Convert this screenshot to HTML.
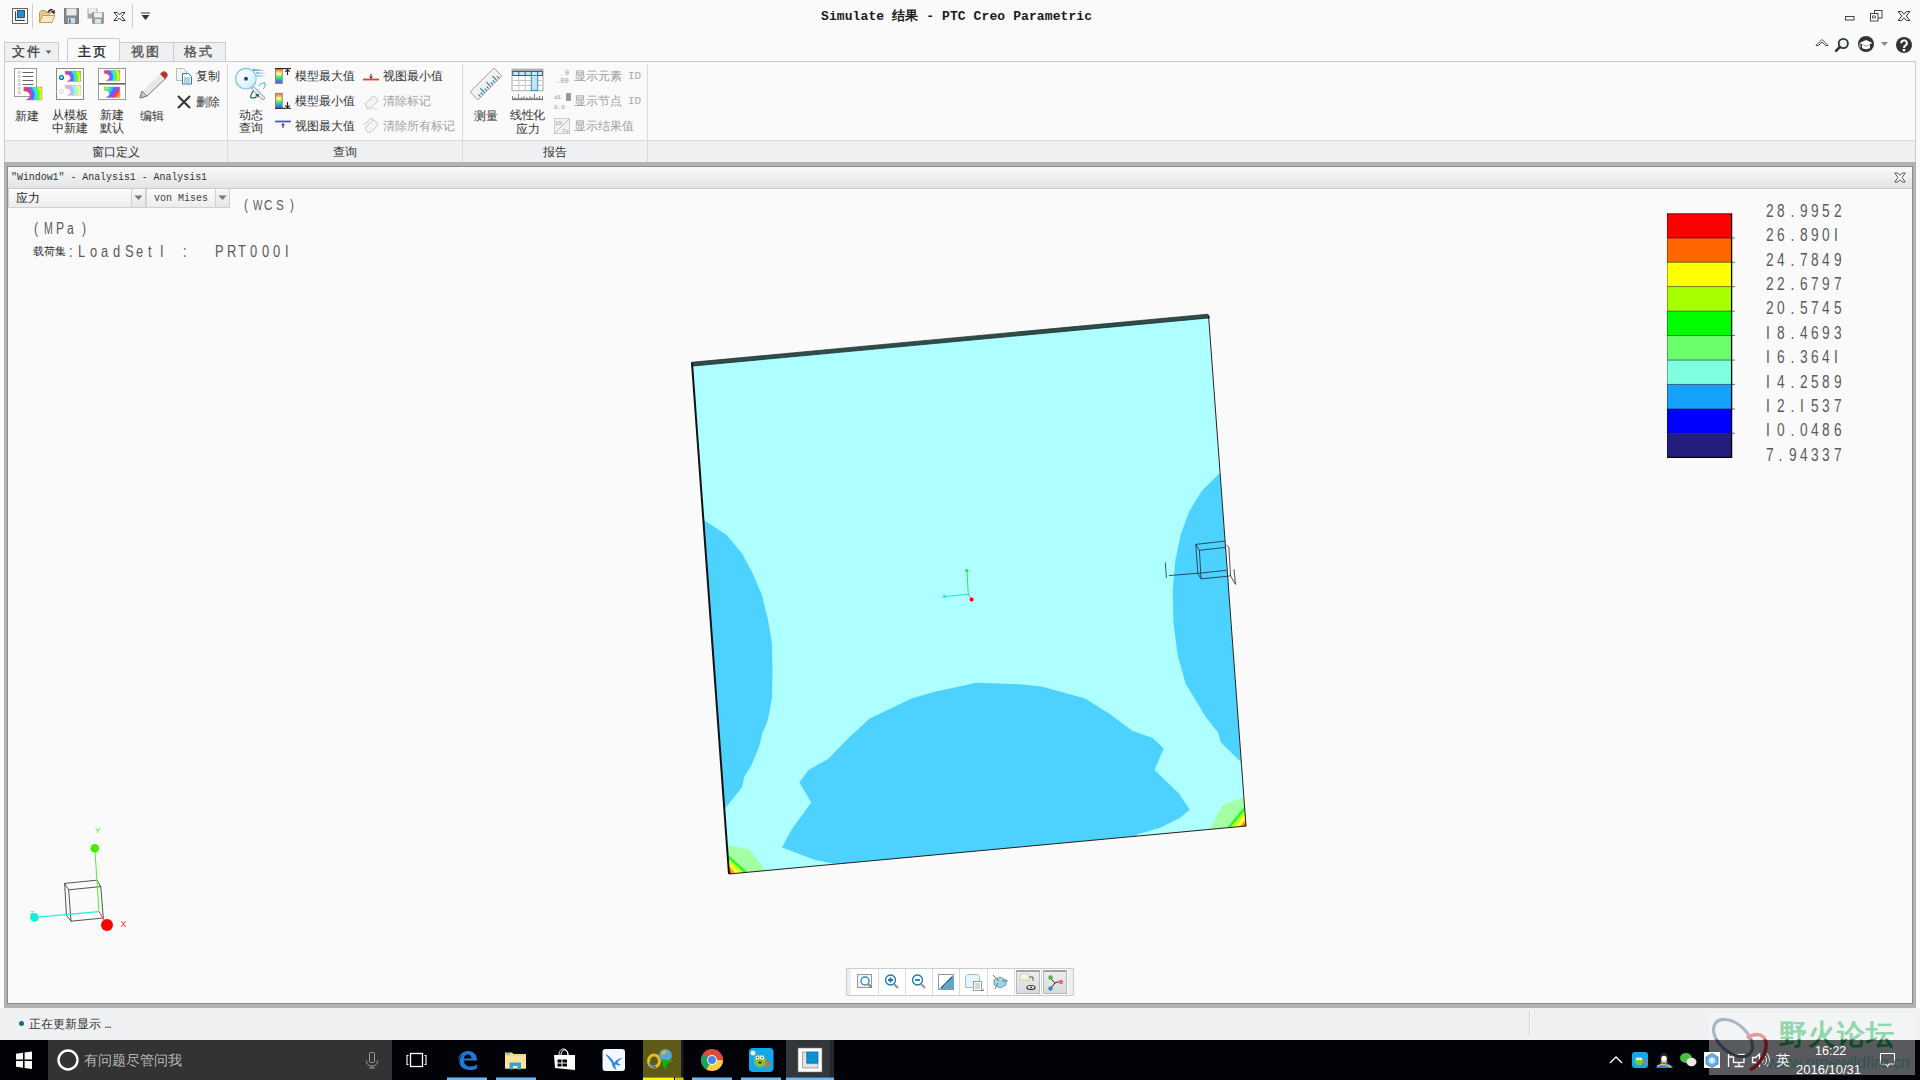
<!DOCTYPE html>
<html><head><meta charset="utf-8">
<style>
*{box-sizing:border-box;margin:0;padding:0}
html,body{width:1920px;height:1080px;overflow:hidden;background:#fafafa;font-family:"Liberation Sans",sans-serif;color:#333}
.a{position:absolute}
.t12{font-size:12px;line-height:14px;white-space:nowrap}
.gray{color:#a8a8a8}
.mono{font-family:"Liberation Mono",monospace}
.sf{font-size:15px;line-height:16px;color:#3a3a3a;white-space:nowrap;font-weight:normal}
.sfx{white-space:nowrap;color:#5a5a5a}
.sfx span{display:inline-block;width:var(--adv);transform:scaleX(0.76);transform-origin:0 0}
</style></head><body>

<!-- ===== Title bar ===== -->
<div id="titlebar" class="a" style="left:0;top:0;width:1920px;height:36px;background:#fafafa"></div>
<div class="a mono" style="left:821px;top:9px;font-size:13px;font-weight:bold;line-height:16px;color:#1a1a1a;white-space:nowrap;letter-spacing:0.1px">Simulate 结果 - PTC Creo Parametric</div>


<!-- quick access toolbar -->
<svg class="a" style="left:11px;top:7px" width="18" height="18" viewBox="0 0 18 18">
 <rect x="1.5" y="1.5" width="15" height="15" fill="#fff" stroke="#666" stroke-width="1"/>
 <path d="M4.5 4.5v9h9" fill="none" stroke="#444" stroke-width="1"/>
 <rect x="4.5" y="4.5" width="9" height="9" fill="#e6e6e2"/>
 <path d="M4.5 4.5v9h9" fill="none" stroke="#444" stroke-width="1"/>
 <rect x="6.5" y="3.5" width="7" height="7" fill="#1a90d8" stroke="#333" stroke-width="0.8"/>
</svg>
<div class="a" style="left:32px;top:4px;width:1px;height:24px;background:#d0d0d0"></div>
<svg class="a" style="left:38px;top:7px" width="18" height="18" viewBox="0 0 18 18">
 <path d="M1.5 15.5v-10l1.5-2h4l1 1.5h4.5v2" fill="#e3c88a" stroke="#b8964c" stroke-width="0.9"/>
 <path d="M1.5 15.5l3-7h12.5l-3 7z" fill="#fbe9c4" stroke="#b8964c" stroke-width="0.9"/>
 <path d="M10 5.5c1-2.5 3-3.5 4.5-2.5" fill="none" stroke="#333" stroke-width="1.6"/>
 <path d="M12.5 4.5l4.5-1.5-.5 4.5z" fill="#333"/>
</svg>
<svg class="a" style="left:63px;top:7px" width="18" height="18" viewBox="0 0 18 18">
 <path d="M1.5 1.5h14v15h-14z" fill="#888" stroke="#666" stroke-width="0.8"/>
 <rect x="3.5" y="1.5" width="10" height="7" fill="#e8e8e8"/>
 <rect x="5" y="11" width="7" height="5.5" fill="#bfe0f0"/>
 <rect x="6" y="11.5" width="1.5" height="4.5" fill="#666"/>
</svg>
<svg class="a" style="left:86px;top:7px" width="19" height="18" viewBox="0 0 19 18">
 <path d="M1.5 1.5h10v10h-10z" fill="#aaa"/>
 <rect x="2.5" y="1.5" width="8" height="5" fill="#eee"/>
 <path d="M6.5 5.5h11v11h-11z" fill="#999" stroke="#888" stroke-width="0.6"/>
 <rect x="8" y="5.5" width="8" height="5" fill="#eee"/>
 <rect x="9" y="12" width="6" height="4.5" fill="#cfe6f2"/>
</svg>
<svg class="a" style="left:113px;top:11px" width="13" height="11" viewBox="0 0 13 11">
 <path d="M1 1.5h3.2l2.3 2.5 2.3-2.5H12L8.6 5.5 12 9.5H8.8L6.5 7 4.2 9.5H1l3.4-4z" fill="#fff" stroke="#333" stroke-width="1"/>
</svg>
<div class="a" style="left:132px;top:4px;width:1px;height:24px;background:#d0d0d0"></div>
<svg class="a" style="left:140px;top:12px" width="11" height="9" viewBox="0 0 11 9">
 <path d="M1 1h9" stroke="#333" stroke-width="1"/><path d="M1.5 3h8L5.5 8z" fill="#333"/>
</svg>

<!-- window controls -->
<svg class="a" style="left:1844px;top:15px" width="12" height="7" viewBox="0 0 12 7"><rect x="1.5" y="1.5" width="8.5" height="3.5" fill="none" stroke="#444" stroke-width="1"/></svg>
<svg class="a" style="left:1869px;top:9px" width="15" height="14" viewBox="0 0 15 14">
 <rect x="5.5" y="1.5" width="7.5" height="7.5" fill="#fff" stroke="#444" stroke-width="1"/>
 <rect x="1.5" y="4.5" width="7.5" height="7.5" fill="#fff" stroke="#444" stroke-width="1"/>
 <rect x="3.5" y="7" width="3" height="2" fill="none" stroke="#444" stroke-width="0.8"/>
</svg>
<svg class="a" style="left:1897px;top:10px" width="14" height="12" viewBox="0 0 14 12">
 <path d="M1.2 1.5h3.3l2.5 2.7 2.5-2.7h3.3L9.2 6l3.6 4.5H9.5L7 7.8 4.5 10.5H1.2L4.8 6z" fill="#fff" stroke="#333" stroke-width="1"/>
</svg>
<svg class="a" style="left:1815px;top:38px" width="14" height="9" viewBox="0 0 14 9">
 <path d="M1 7.5L7 1.5l6 6h-2.5L7 4 3.5 7.5z" fill="#fff" stroke="#333" stroke-width="0.9"/>
</svg>
<svg class="a" style="left:1834px;top:37px" width="16" height="16" viewBox="0 0 16 16">
 <circle cx="9.3" cy="6.5" r="4.6" fill="#eaf4fb" stroke="#333" stroke-width="1.8"/>
 <path d="M5.8 10L2 13.8" stroke="#333" stroke-width="2.5" stroke-linecap="round"/>
</svg>
<svg class="a" style="left:1857px;top:35px" width="18" height="18" viewBox="0 0 18 18">
 <circle cx="9" cy="9" r="8" fill="#333"/>
 <path d="M2.5 8L9 5l6.5 3L9 11z" fill="#fff"/>
 <path d="M5 9.5v3.5c2 1.5 6 1.5 8 0V9.5L9 11.5z" fill="#fff"/>
 <path d="M3 8.5v4" stroke="#fff" stroke-width="0.8"/>
</svg>
<svg class="a" style="left:1880px;top:41px" width="9" height="6" viewBox="0 0 9 6"><path d="M1 1h7L4.5 5z" fill="#888"/></svg>
<svg class="a" style="left:1895px;top:36px" width="18" height="18" viewBox="0 0 18 18">
 <circle cx="9" cy="9" r="8" fill="#333"/>
 <path d="M6.2 7.2a2.8 2.8 0 1 1 4 2.5c-1 .6-1.2 1-1.2 2.2" fill="none" stroke="#fff" stroke-width="2"/>
 <rect x="7.8" y="13" width="2.4" height="2.3" fill="#fff"/>
</svg>

<!-- ===== Tabs ===== -->
<div class="a" style="left:4px;top:42px;width:55px;height:20px;background:#eff0f2;border:1px solid #c8cbcf;border-bottom:none"></div>
<div class="a t12" style="left:12px;top:45px;color:#444;font-size:13px;letter-spacing:1.5px;-webkit-text-stroke:0.35px">文件</div><svg class="a" style="left:45px;top:50px" width="7" height="5" viewBox="0 0 7 5"><path d="M0.5 0.5h6L3.5 4z" fill="#666"/></svg>
<div class="a" style="left:67px;top:38px;width:53px;height:24px;background:#fafafa;border:1px solid #c8cbcf;border-bottom:none;border-radius:2px 2px 0 0"></div>
<div class="a t12" style="left:78px;top:45px;color:#222;font-size:13px;letter-spacing:1.5px;-webkit-text-stroke:0.35px">主页</div>
<div class="a" style="left:120px;top:42px;width:54px;height:20px;background:#eff0f2;border:1px solid #c8cbcf;border-bottom:none;border-left:none"></div>
<div class="a t12" style="left:131px;top:45px;color:#555;font-size:13px;letter-spacing:1.5px;-webkit-text-stroke:0.35px">视图</div>
<div class="a" style="left:173px;top:42px;width:53px;height:20px;background:#eff0f2;border:1px solid #c8cbcf;border-bottom:none"></div>
<div class="a t12" style="left:184px;top:45px;color:#555;font-size:13px;letter-spacing:1.5px;-webkit-text-stroke:0.35px">格式</div>

<!-- ===== Ribbon ===== -->
<div class="a" style="left:4px;top:61px;width:1912px;height:102px;background:#fafafa;border:1px solid #c8cbcf;border-bottom:none"></div>
<div class="a" style="left:5px;top:140px;width:1910px;height:23px;background:#eff0f2;border-top:1px solid #d4d6d9"></div>
<div class="a t12" style="left:92px;top:145px">窗口定义</div>
<div class="a t12" style="left:333px;top:145px">查询</div>
<div class="a t12" style="left:543px;top:145px">报告</div>
<div class="a" style="left:227px;top:64px;width:1px;height:99px;background:#d8dadd"></div>
<div class="a" style="left:462px;top:64px;width:1px;height:99px;background:#d8dadd"></div>
<div class="a" style="left:647px;top:64px;width:1px;height:99px;background:#d8dadd"></div>


<!-- ribbon group 1 -->
<svg class="a" style="left:0;top:60px" width="135" height="45" viewBox="0 60 135 45">
 <defs>
  <radialGradient id="rg1" gradientUnits="userSpaceOnUse" cx="24" cy="95" r="20">
   <stop offset="0.28" stop-color="#ff3030"/><stop offset="0.38" stop-color="#b040ff"/><stop offset="0.48" stop-color="#3080ff"/><stop offset="0.58" stop-color="#30e0ff"/><stop offset="0.72" stop-color="#40ff40"/><stop offset="0.86" stop-color="#ffff00"/><stop offset="1" stop-color="#ff8000"/>
  </radialGradient>
  <radialGradient id="rg2" gradientUnits="userSpaceOnUse" cx="64.5" cy="78" r="17">
   <stop offset="0.3" stop-color="#ff3030"/><stop offset="0.4" stop-color="#b040ff"/><stop offset="0.5" stop-color="#3080ff"/><stop offset="0.6" stop-color="#30e0ff"/><stop offset="0.74" stop-color="#40ff40"/><stop offset="0.88" stop-color="#ffff00"/><stop offset="1" stop-color="#ff8000"/>
  </radialGradient>
  <radialGradient id="rg3" gradientUnits="userSpaceOnUse" cx="64.5" cy="92" r="17">
   <stop offset="0.3" stop-color="#ff3030"/><stop offset="0.4" stop-color="#b040ff"/><stop offset="0.5" stop-color="#3080ff"/><stop offset="0.6" stop-color="#30e0ff"/><stop offset="0.74" stop-color="#40ff40"/><stop offset="0.88" stop-color="#ffff00"/><stop offset="1" stop-color="#ff8000"/>
  </radialGradient>
  <radialGradient id="rg4" gradientUnits="userSpaceOnUse" cx="103.5" cy="77" r="17">
   <stop offset="0.3" stop-color="#ff3030"/><stop offset="0.4" stop-color="#b040ff"/><stop offset="0.5" stop-color="#3080ff"/><stop offset="0.6" stop-color="#30e0ff"/><stop offset="0.74" stop-color="#40ff40"/><stop offset="0.88" stop-color="#ffff00"/><stop offset="1" stop-color="#ff8000"/>
  </radialGradient>
  <linearGradient id="lg5" gradientUnits="userSpaceOnUse" x1="104" y1="87" x2="120" y2="98">
   <stop offset="0" stop-color="#ffff00"/><stop offset="0.2" stop-color="#60ff60"/><stop offset="0.38" stop-color="#30c0ff"/><stop offset="0.5" stop-color="#3070ff"/><stop offset="0.62" stop-color="#b040ff"/><stop offset="0.72" stop-color="#ff3030"/><stop offset="0.86" stop-color="#ffa000"/><stop offset="1" stop-color="#ffff00"/>
  </linearGradient>
 </defs>
 <!-- 新建 -->
 <rect x="14.5" y="68.5" width="22" height="28" fill="#fff" stroke="#9a9a9a"/>
 <g fill="none" stroke="#999" stroke-width="0.7"><circle cx="19.3" cy="72.5" r="1.1"/><circle cx="19.3" cy="76.5" r="1.1"/><circle cx="19.3" cy="80.5" r="1.1"/><circle cx="19.3" cy="84.5" r="1.1"/><circle cx="19.3" cy="88.5" r="1.1"/><circle cx="19.3" cy="92.5" r="1.1"/></g>
 <path d="M22.5 72.5h11M22.5 76.5h11M22.5 80.5h11M22.5 84.5h11" stroke="#555" stroke-width="0.9"/>
 <path d="M23.8 87.0H41.9V100.0H25.9C29.4 98.1 30.5 96.2 29.8 94.4C28.8 91.9 26.5 91.0 23.8 91.0Z" fill="url(#rg1)" stroke="#999" stroke-width="0.5"/>
 <!-- 从模板中新建 -->
 <rect x="56.5" y="68.5" width="27" height="31" fill="#fff" stroke="#8a8a8a"/>
 <circle cx="61.5" cy="77.5" r="2" fill="#8fe0f8" stroke="#0a6a90" stroke-width="1.1"/>
 <circle cx="61.5" cy="91.5" r="2" fill="#fff" stroke="#ccc" stroke-width="0.9"/>
 <path d="M65.2 71.1H80.8V81.5H67.0C70.0 80.0 71.0 78.5 70.4 77.0C69.5 75.0 67.5 74.3 65.2 74.3Z" fill="url(#rg2)" stroke="#999" stroke-width="0.5"/>
 <path d="M65.2 85.1H80.8V95.5H67.0C70.0 94.0 71.0 92.5 70.4 91.0C69.5 89.0 67.5 88.3 65.2 88.3Z" fill="url(#rg3)" opacity="0.45" stroke="#999" stroke-width="0.5"/>
 <!-- 新建默认 -->
 <rect x="98.5" y="68.5" width="27" height="15" fill="#fff" stroke="#9a9a9a"/>
 <rect x="98.5" y="84.5" width="27" height="15" fill="#fff" stroke="#9a9a9a"/>
 <path d="M98.5 83.5h27" stroke="#666" stroke-width="1"/>
 <path d="M104.2 70.2H119.8V80.8H106.0C109.0 79.3 110.0 77.7 109.4 76.2C108.5 74.2 106.5 73.5 104.2 73.5Z" fill="url(#rg4)" stroke="#999" stroke-width="0.5"/>
 <path d="M104.2 87.0H119.8V97.6H106.0C109.0 96.1 110.0 94.5 109.4 93.0C108.5 91.0 106.5 90.3 104.2 90.3Z" fill="url(#lg5)" stroke="#888" stroke-width="0.5"/>
</svg>
<div class="a t12" style="left:15px;top:109px">新建</div>
<div class="a t12" style="left:52px;top:109px;line-height:13px">从模板<br>中新建</div>
<div class="a t12" style="left:100px;top:109px;line-height:13px">新建<br>默认</div>

<svg class="a" style="left:136px;top:68px" width="32" height="32" viewBox="0 0 32 32">
 <path d="M4 30l2-7 19-18 5 5-19 18z" fill="#e8e8e8" stroke="#777" stroke-width="1"/>
 <path d="M6 23l19-18" stroke="#fff" stroke-width="1.2"/>
 <path d="M24 6l5 5 1.5-1.5a2.5 2.5 0 0 0-5-5z" fill="#b03a2a"/>
 <path d="M4 30l2-7 5 5z" fill="#d9c3a0" stroke="#777" stroke-width="0.8"/>
</svg>
<div class="a t12" style="left:140px;top:109px">编辑</div>

<svg class="a" style="left:175px;top:67px" width="18" height="18" viewBox="0 0 18 18">
 <path d="M1.5 1.5h7l3 3v9h-10z" fill="#f4f4f4" stroke="#aaa" stroke-width="0.8"/>
 <path d="M7.5 6.5h6l3 3v7.5h-9z" fill="#fff" stroke="#2a7ab0" stroke-width="1"/>
 <path d="M9 11h6M9 13h6M9 15h6" stroke="#2a7ab0" stroke-width="0.7"/>
</svg>
<div class="a t12" style="left:196px;top:69px">复制</div>
<svg class="a" style="left:176px;top:94px" width="16" height="16" viewBox="0 0 16 16">
 <path d="M2 2l12 12M14 2L2 14" stroke="#3a3a3a" stroke-width="2.2"/>
</svg>
<div class="a t12" style="left:196px;top:95px">删除</div>

<!-- ribbon group 2 -->
<svg class="a" style="left:228px;top:62px" width="45" height="42" viewBox="228 62 45 42">
 <defs>
  <radialGradient id="lens" cx="0.35" cy="0.35" r="0.75"><stop offset="0" stop-color="#ffffff"/><stop offset="1" stop-color="#cdeef8"/></radialGradient>
  <linearGradient id="spd" x1="0" x2="1"><stop offset="0" stop-color="#1a8cc8"/><stop offset="1" stop-color="#1a8cc8" stop-opacity="0"/></linearGradient>
 </defs>
 <path d="M253 69.2l11 .6v1.2l-11-.2zM256 72.2l10.5.5v1.2l-10.5-.2zM256.5 75.2l10 .4v1.2l-10-.2z" fill="url(#spd)"/>
 <path d="M253.5 88.5l9.5 9.5" stroke="#a8a8a8" stroke-width="4" stroke-linecap="round"/>
 <path d="M253.5 88.5l9.5 9.5" stroke="#f0f0f0" stroke-width="2" stroke-linecap="round"/>
 <circle cx="245.9" cy="78.7" r="10.3" fill="url(#lens)" stroke="#7cc4e0" stroke-width="1.1"/>
 <circle cx="246" cy="78.8" r="2" fill="#0a5a80"/>
 <path d="M258.5 85.5c2.5-2 5.5-3 6.5-2.5 1 .8-.5 4-1.5 6" fill="none" stroke="#3aa8dc" stroke-width="1"/>
 <path d="M253.5 91c-2 2-3.5 5.5-2.5 6.5 1 1 4 .3 5.5-.8" fill="none" stroke="#0a5a80" stroke-width="1.1"/>
 <path d="M255 94.5l4-.7-.8 4z" fill="#0a5a80"/>
</svg>
<div class="a t12" style="left:239px;top:109px;line-height:12.5px">动态<br>查询</div>

<svg class="a" style="left:272px;top:66px" width="22" height="46" viewBox="272 66 22 46">
 <defs><linearGradient id="spec" x1="0" y1="0" x2="0" y2="1"><stop offset="0" stop-color="#ff6a30"/><stop offset="0.2" stop-color="#ffc030"/><stop offset="0.33" stop-color="#fff8c0"/><stop offset="0.48" stop-color="#a8f060"/><stop offset="0.6" stop-color="#40f040"/><stop offset="0.75" stop-color="#20b0f0"/><stop offset="0.88" stop-color="#3a70f0"/><stop offset="1" stop-color="#a050d0"/></linearGradient></defs>
 <rect x="275.6" y="68.6" width="6.6" height="14.8" fill="url(#spec)" stroke="#808080" stroke-width="1"/>
 <path d="M275 68.6h16" stroke="#222" stroke-width="1.1"/>
 <path d="M287.5 75V69.5M285.3 71.8l2.2-2.3 2.2 2.3" fill="none" stroke="#222" stroke-width="1.1"/>
 <rect x="275.6" y="93.4" width="6.6" height="14.8" fill="url(#spec)" stroke="#808080" stroke-width="1"/>
 <path d="M275 108.3h16" stroke="#222" stroke-width="1.1"/>
 <path d="M287.5 102v5.6M285.3 105.4l2.2 2.3 2.2-2.3" fill="none" stroke="#222" stroke-width="1.1"/>
</svg>
<div class="a t12" style="left:295px;top:69px">模型最大值</div>

<div class="a t12" style="left:295px;top:94px">模型最小值</div>
<svg class="a" style="left:274px;top:119px" width="18" height="12" viewBox="0 0 18 12">
 <path d="M1 2.5h16" stroke="#4a5ad8" stroke-width="1.8"/>
 <path d="M9 9V4.5M7.6 6.4L9 4.8l1.4 1.6" fill="none" stroke="#222" stroke-width="1"/>
</svg>
<div class="a t12" style="left:295px;top:119px">视图最大值</div>

<svg class="a" style="left:362px;top:70px" width="18" height="12" viewBox="0 0 18 12">
 <path d="M1 9.5h16" stroke="#e8402a" stroke-width="1.8"/>
 <path d="M9 4v4.5M7.6 6.6L9 8.2l1.4-1.6" fill="none" stroke="#222" stroke-width="1"/>
</svg>
<div class="a t12" style="left:383px;top:69px">视图最小值</div>
<svg class="a" style="left:362px;top:94px" width="18" height="16" viewBox="0 0 18 16">
 <path d="M3 10l7-7a2 2 0 0 1 3 0l2 2a2 2 0 0 1 0 3l-6 6H5z" fill="#f4f4f4" stroke="#c8c8c8" stroke-width="1"/>
 <path d="M4 15h12" stroke="#ddd" stroke-width="1"/>
</svg>
<div class="a t12 gray" style="left:383px;top:94px;color:#a0a0a0">清除标记</div>
<svg class="a" style="left:362px;top:117px" width="18" height="18" viewBox="0 0 18 18">
 <path d="M2 8l6-6a2 2 0 0 1 3 0l3 3" fill="#f4f4f4" stroke="#c8c8c8" stroke-width="1"/>
 <path d="M3 11l7-7a2 2 0 0 1 3 0l2 2a2 2 0 0 1 0 3l-6 6H5z" fill="#f4f4f4" stroke="#c8c8c8" stroke-width="1"/>
</svg>
<div class="a t12" style="left:383px;top:119px;color:#a0a0a0">清除所有标记</div>

<!-- ribbon group 3 -->
<svg class="a" style="left:466px;top:64px" width="80" height="40" viewBox="466 64 80 40">
 <path d="M494.1 68L501.8 76.1L478.1 99.8L470 91.9Z" fill="#f0f0f0" stroke="#9a9a9a" stroke-width="0.9"/>
 <path d="M480.4 96.6L478.6 94.7M482.5 94.5L480.6 92.7M484.5 92.5L480.3 88.3M486.5 90.5L484.7 88.6M488.6 88.4L486.7 86.6M490.6 86.4L486.4 82.2M492.7 84.3L490.8 82.5M494.7 82.3L492.8 80.4M496.7 80.3L492.5 76.1M498.8 78.2L496.9 76.4" stroke="#1a78a8" stroke-width="1.1"/>
 <rect x="512" y="69.2" width="31" height="21.5" fill="#fff" stroke="#aaa" stroke-width="1"/>
 <rect x="512" y="69" width="31" height="2" fill="#b0aca8"/>
 <rect x="512.8" y="71.5" width="29.5" height="4" fill="#c8e8f6"/>
 <path d="M512.5 71.5h30M512.5 75.5h30M512.8 71v5M518.8 71v5M525.2 71v5M531.3 71v5M537.7 71v5M542.4 71v5" stroke="#1a6a98" stroke-width="1"/>
 <path d="M512.5 80.5h30M512.5 85.5h30M518.8 76v14.5M525.2 76v14.5" stroke="#c4c4c4" stroke-width="1"/>
 <rect x="531.3" y="75.5" width="6.4" height="15" fill="#c2e4f4" stroke="#2a90c8" stroke-width="1"/>
 <path d="M512 99.3h31" stroke="#777" stroke-width="1.6"/>
 <path d="M512.5 99v-3M515 99v-2M518.5 99v-5M521.5 99v-2M524 99v-3M527 99v-2M530 99v-3M532 99v-2M534.5 99v-5M537 99v-2M539.5 99v-3M542.5 99v-3" stroke="#777" stroke-width="0.9"/>
</svg>
<div class="a t12" style="left:474px;top:109px">测量</div>

<div class="a t12" style="left:510px;top:109px;line-height:13px;letter-spacing:-0.5px">线性化</div><div class="a t12" style="left:516px;top:122px">应力</div>

<svg class="a" style="left:555px;top:68px" width="18" height="18" viewBox="0 0 18 18">
 <text x="1" y="15" font-size="7" fill="#999" font-family="Liberation Mono">.00</text>
 <text x="10" y="7" font-size="7" fill="#999" font-family="Liberation Mono">0</text>
</svg>
<div class="a t12" style="left:574px;top:69px;color:#a0a0a0">显示元素</div>
<div class="a mono" style="left:628px;top:70px;font-size:11px;line-height:12px;color:#a8a8a8">ID</div>
<svg class="a" style="left:553px;top:92px" width="20" height="18" viewBox="0 0 20 18">
 <text x="1" y="7" font-size="6" fill="#999" font-family="Liberation Mono">d1</text>
 <text x="1" y="17" font-size="6" fill="#999" font-family="Liberation Mono">0.0</text>
 <rect x="13" y="1" width="5" height="8" rx="1" fill="#999"/>
</svg>
<div class="a t12" style="left:574px;top:94px;color:#a0a0a0">显示节点</div>
<div class="a mono" style="left:628px;top:95px;font-size:11px;line-height:12px;color:#a8a8a8">ID</div>
<svg class="a" style="left:553px;top:117px" width="18" height="18" viewBox="0 0 18 18">
 <rect x="1.5" y="1.5" width="15" height="15" fill="#f2f2f2" stroke="#ccc"/>
 <path d="M2 16L16 2" stroke="#bbb"/>
 <text x="2" y="8" font-size="6" fill="#999" font-family="Liberation Mono">15</text>
 <text x="9" y="16" font-size="6" fill="#999" font-family="Liberation Mono">7x</text>
</svg>
<div class="a t12" style="left:574px;top:119px;color:#a0a0a0">显示结果值</div>

<!-- ===== Graphics window frame ===== -->
<div class="a" style="left:4px;top:162px;width:1912px;height:847px;background:#b1b2b4;border-bottom:1.5px solid #8e8f91"></div>
<div class="a" style="left:7px;top:166px;width:1906px;height:838px;background:#fafafa;border:1px solid #8a8b8d"></div>
<div class="a" style="left:8px;top:167px;width:1904px;height:22px;background:linear-gradient(#f9f9f9,#e3e4e5);border-bottom:1px solid #c9cacc"></div>
<div class="a mono" style="left:11px;top:171px;font-size:11px;line-height:13px;color:#333;white-space:nowrap;transform:scaleX(0.9);transform-origin:0 0">"Window1" - Analysis1 - Analysis1</div>


<svg class="a" style="left:1894px;top:172px" width="12" height="11" viewBox="0 0 12 11">
 <path d="M0.8 1h3l2.2 2.4L8.2 1h3L8 5.5l3.2 4.5h-3L6 7.6 3.8 10h-3L4 5.5z" fill="#fff" stroke="#444" stroke-width="0.9"/>
</svg>
<!-- dropdowns -->
<div class="a" style="left:8px;top:189px;width:138px;height:19px;background:linear-gradient(#fdfdfd,#ececed);border:1px solid #d0d1d3;border-top:none"></div>
<div class="a" style="left:131px;top:189px;width:15px;height:19px;background:linear-gradient(#f8f8f8,#e4e5e6);border:1px solid #d0d1d3;border-top:none"></div>
<svg class="a" style="left:134px;top:195px" width="9" height="6" viewBox="0 0 9 6"><path d="M0.5 0.5h8L4.5 5z" fill="#777"/></svg>
<div class="a t12" style="left:16px;top:191px;color:#222">应力</div>
<div class="a" style="left:146px;top:189px;width:84px;height:19px;background:linear-gradient(#fdfdfd,#ececed);border:1px solid #d0d1d3;border-top:none"></div>
<div class="a" style="left:215px;top:189px;width:15px;height:19px;background:linear-gradient(#f8f8f8,#e4e5e6);border:1px solid #d0d1d3;border-top:none"></div>
<svg class="a" style="left:218px;top:195px" width="9" height="6" viewBox="0 0 9 6"><path d="M0.5 0.5h8L4.5 5z" fill="#777"/></svg>
<div class="a mono" style="left:154px;top:192px;font-size:11px;line-height:13px;color:#444;white-space:nowrap;transform:scaleX(0.91);transform-origin:0 0">von Mises</div>

<!-- stroke font texts -->
<div class="a" style="left:33px;top:244px;font-size:11px;line-height:14px;font-weight:500;color:#333;white-space:nowrap;letter-spacing:-0.2px">载荷集</div>

<div class="a sfx" style="left:244px;top:197px;font-size:15.5px;line-height:16px;--adv:12px"><span style="width:8.5px">(</span><span style="width:11.5px;transform:scaleX(0.64)">W</span><span style="width:11.5px">C</span><span style="width:14px">S</span><span>)</span></div>
<div class="a sfx" style="left:34px;top:220px;font-size:16px;line-height:17px;--adv:12px"><span style="width:10px">(</span><span style="width:12.3px;transform:scaleX(0.66)">M</span><span style="width:11px">P</span><span style="width:14.5px">a</span><span>)</span></div>
<div class="a sfx" style="left:69px;top:243px;font-size:17px;line-height:17px;--adv:11.7px"><span style="width:9px">:</span><span>L</span><span>o</span><span>a</span><span>d</span><span>S</span><span>e</span><span>t</span><span>I</span></div>
<div class="a sfx" style="left:183px;top:243px;font-size:17px;line-height:17px;--adv:11.7px"><span>:</span></div>
<div class="a sfx" style="left:215px;top:243px;font-size:17px;line-height:17px;--adv:11.7px"><span>P</span><span>R</span><span>T</span><span>0</span><span>0</span><span>0</span><span>I</span></div>
<!-- legend -->
<svg class="a" style="left:1660px;top:205px" width="80" height="260" viewBox="1660 205 80 260">
 <rect x="1667" y="213.4" width="64.5" height="24.6" fill="#ff0000"/>
 <rect x="1667" y="238.0" width="64.5" height="24.3" fill="#ff6600"/>
 <rect x="1667" y="262.3" width="64.5" height="24.3" fill="#ffff00"/>
 <rect x="1667" y="286.6" width="64.5" height="24.6" fill="#a6ff00"/>
 <rect x="1667" y="311.2" width="64.5" height="24.3" fill="#00ff00"/>
 <rect x="1667" y="335.5" width="64.5" height="24.6" fill="#6aff6a"/>
 <rect x="1667" y="360.1" width="64.5" height="24.3" fill="#80ffe0"/>
 <rect x="1667" y="384.4" width="64.5" height="24.6" fill="#16a0ff"/>
 <rect x="1667" y="409.0" width="64.5" height="24.3" fill="#0000ff"/>
 <rect x="1667" y="433.3" width="64.5" height="24.2" fill="#231e7c"/>
 <path d="M1667 238.0H1731.5" stroke="rgba(0,0,0,0.5)" stroke-width="1"/>
 <path d="M1731.5 238.0H1735" stroke="#777" stroke-width="1"/>
 <path d="M1667 262.3H1731.5" stroke="rgba(0,0,0,0.5)" stroke-width="1"/>
 <path d="M1731.5 262.3H1735" stroke="#777" stroke-width="1"/>
 <path d="M1667 286.6H1731.5" stroke="rgba(0,0,0,0.5)" stroke-width="1"/>
 <path d="M1731.5 286.6H1735" stroke="#777" stroke-width="1"/>
 <path d="M1667 311.2H1731.5" stroke="rgba(0,0,0,0.5)" stroke-width="1"/>
 <path d="M1731.5 311.2H1735" stroke="#777" stroke-width="1"/>
 <path d="M1667 335.5H1731.5" stroke="rgba(0,0,0,0.5)" stroke-width="1"/>
 <path d="M1731.5 335.5H1735" stroke="#777" stroke-width="1"/>
 <path d="M1667 360.1H1731.5" stroke="rgba(0,0,0,0.5)" stroke-width="1"/>
 <path d="M1731.5 360.1H1735" stroke="#777" stroke-width="1"/>
 <path d="M1667 384.4H1731.5" stroke="rgba(0,0,0,0.5)" stroke-width="1"/>
 <path d="M1731.5 384.4H1735" stroke="#777" stroke-width="1"/>
 <path d="M1667 409.0H1731.5" stroke="rgba(0,0,0,0.5)" stroke-width="1"/>
 <path d="M1731.5 409.0H1735" stroke="#777" stroke-width="1"/>
 <path d="M1667 433.3H1731.5" stroke="rgba(0,0,0,0.5)" stroke-width="1"/>
 <path d="M1731.5 433.3H1735" stroke="#777" stroke-width="1"/>
 <path d="M1667 213.9H1731.5" stroke="rgba(0,0,0,0.5)" stroke-width="1"/>
 <path d="M1667.5 213.4V457.5" stroke="rgba(0,0,0,0.3)" stroke-width="1"/>
 <path d="M1731.6 213.4V458" stroke="#000" stroke-width="1.3"/>
 <path d="M1667 457.4H1732" stroke="#000" stroke-width="1.2"/>
</svg>
<div class="a sfx" style="left:1766px;top:201.7px;font-size:18px;line-height:18px;--adv:11.3px"><span>2</span><span>8</span><span style="transform:scaleX(0.76) translateX(2px)">.</span><span>9</span><span>9</span><span>5</span><span>2</span></div>
<div class="a sfx" style="left:1766px;top:226.1px;font-size:18px;line-height:18px;--adv:11.3px"><span>2</span><span>6</span><span style="transform:scaleX(0.76) translateX(2px)">.</span><span>8</span><span>9</span><span>0</span><span>I</span></div>
<div class="a sfx" style="left:1766px;top:250.5px;font-size:18px;line-height:18px;--adv:11.3px"><span>2</span><span>4</span><span style="transform:scaleX(0.76) translateX(2px)">.</span><span>7</span><span>8</span><span>4</span><span>9</span></div>
<div class="a sfx" style="left:1766px;top:274.9px;font-size:18px;line-height:18px;--adv:11.3px"><span>2</span><span>2</span><span style="transform:scaleX(0.76) translateX(2px)">.</span><span>6</span><span>7</span><span>9</span><span>7</span></div>
<div class="a sfx" style="left:1766px;top:299.3px;font-size:18px;line-height:18px;--adv:11.3px"><span>2</span><span>0</span><span style="transform:scaleX(0.76) translateX(2px)">.</span><span>5</span><span>7</span><span>4</span><span>5</span></div>
<div class="a sfx" style="left:1766px;top:323.7px;font-size:18px;line-height:18px;--adv:11.3px"><span>I</span><span>8</span><span style="transform:scaleX(0.76) translateX(2px)">.</span><span>4</span><span>6</span><span>9</span><span>3</span></div>
<div class="a sfx" style="left:1766px;top:348.1px;font-size:18px;line-height:18px;--adv:11.3px"><span>I</span><span>6</span><span style="transform:scaleX(0.76) translateX(2px)">.</span><span>3</span><span>6</span><span>4</span><span>I</span></div>
<div class="a sfx" style="left:1766px;top:372.5px;font-size:18px;line-height:18px;--adv:11.3px"><span>I</span><span>4</span><span style="transform:scaleX(0.76) translateX(2px)">.</span><span>2</span><span>5</span><span>8</span><span>9</span></div>
<div class="a sfx" style="left:1766px;top:396.9px;font-size:18px;line-height:18px;--adv:11.3px"><span>I</span><span>2</span><span style="transform:scaleX(0.76) translateX(2px)">.</span><span>I</span><span>5</span><span>3</span><span>7</span></div>
<div class="a sfx" style="left:1766px;top:421.3px;font-size:18px;line-height:18px;--adv:11.3px"><span>I</span><span>0</span><span style="transform:scaleX(0.76) translateX(2px)">.</span><span>0</span><span>4</span><span>8</span><span>6</span></div>
<div class="a sfx" style="left:1766px;top:445.7px;font-size:18px;line-height:18px;--adv:11.3px"><span>7</span><span style="transform:scaleX(0.76) translateX(2px)">.</span><span>9</span><span>4</span><span>3</span><span>3</span><span>7</span></div>
<!-- model & triads -->
<svg class="a" style="left:0;top:0" width="1920" height="1080" viewBox="0 0 1920 1080">
 <defs>
  <clipPath id="plate"><path d="M691.5 362.5L1208 314.5L1246 826L729 874Z"/></clipPath>
 </defs>
 <path d="M691.5 362.5L1208 314.5L1246 826L729 874Z" fill="#aeffff"/>
 <g clip-path="url(#plate)">
  <path d="M690 500L703.7 519.9L726.7 535.1L742 553.5L752.6 573.3L761.8 594.7L767.9 619.2L771.9 643.6L772.5 671.1L771.9 698.6L767.9 720L762.7 732.2L758.8 747.5L751.1 765.8L744.4 776.5L742 787.2L725.1 808.6L700 830Z" fill="#4dd2ff"/>
  <path d="M1240 460L1220.7 472.3L1201.9 490.8L1188.9 511.9L1180.8 534.6L1175.3 560.6L1172.7 589.8L1173.4 622.2L1177.6 654.7L1185.7 683.9L1193.8 696.9L1205.2 716.3L1218.1 732.6L1220.7 742.3L1242 763L1260 763L1260 460Z" fill="#4dd2ff"/>
  <path d="M781.9 847.6L815.5 860L845 866L850 880L1140 880L1136.7 834.5L1159.6 828.1L1180.2 817.8L1189.8 809.8L1179.1 793.8L1154.5 770.1L1163.7 748.4L1152.7 738.1L1132.1 730.7L1109.2 713.5L1085.1 698.6L1041.6 686.5L1019.8 684.2L976.3 682.8L935 691.8L912.1 698.2L869.7 718.6L849.1 737.6L828.4 758.7L808.5 770.1L799.3 782.3L811.2 802.5L791.8 829.3Z" fill="#4dd2ff"/>
  <!-- BL corner -->
  <path d="M720 844L727.5 845L748.9 849.2L765.6 870L770 880L720 880Z" fill="#a4ffa4"/>
  <path d="M720 852L728.3 855L747.8 872.5L747.8 880L720 880Z" fill="#22ff22"/>
  <path d="M720 857L728.5 858.5L744.5 873L744 880L720 880Z" fill="#ccff33"/>
  <path d="M720 861L729 862L740 873.5L740 880L720 880Z" fill="#ffff22"/>
  <path d="M720 865L729 866L736 874L736 880L720 880Z" fill="#ff9a2a"/>
  <path d="M720 869L729.5 870L732 874L732 880L720 880Z" fill="#ff2222"/>
  <!-- BR corner -->
  <path d="M1250 795L1243.9 797.2L1222.8 805L1210 828.3L1210 840L1250 840Z" fill="#a4ffa4"/>
  <path d="M1250 806L1244.5 806.5L1227.8 827.2L1227 840L1250 840Z" fill="#22ff22"/>
  <path d="M1250 810L1244.8 810.5L1231 827L1231 840L1250 840Z" fill="#ccff33"/>
  <path d="M1250 814L1245 814.5L1235.5 826.5L1235 840L1250 840Z" fill="#ffff22"/>
  <path d="M1250 819L1245.3 819.5L1240.5 826L1240 840L1250 840Z" fill="#ff9a2a"/>
  <path d="M1250 822L1245.5 823L1243.5 826L1243 840L1250 840Z" fill="#ff2222"/>
 </g>
 <!-- edges -->
 <path d="M691.3 362.3L1207.8 314.2L1209.8 317.9L693.3 366Z" fill="#2f4d4a" stroke="#1a2a2a" stroke-width="0.7"/>
 <path d="M692 363L729 874" stroke="#111" stroke-width="2"/>
 <path d="M1208.5 315L1246 826L729 874" fill="none" stroke="#222" stroke-width="1"/>
 <!-- center csys -->
 <path d="M966.9 570.6L968.3 594.3" stroke="#33e833" stroke-width="1"/>
 <path d="M944.3 596.6L968.3 594.3" stroke="#22e0d0" stroke-width="1"/>
 <path d="M968.3 594.3L971.6 599.4" stroke="#ff6060" stroke-width="1"/>
 <circle cx="966.9" cy="570.6" r="1.6" fill="#33e800"/>
 <circle cx="944.3" cy="596.6" r="1.4" fill="#20e0d0"/>
 <circle cx="971.6" cy="599.4" r="2" fill="#ff0000"/>
 <!-- right box -->
 <g fill="none" stroke="#1a2a35" stroke-width="0.8">
  <path d="M1195.8 544.4L1225 541.1M1199.4 550.3L1225 547.5M1195.8 544.4L1199.4 550.3M1195.8 544.4L1197.8 573.3M1199.4 550.3L1201.1 578.9M1197.8 573.3L1226.7 570.3M1201.1 578.9L1228.9 576.1M1197.8 573.3L1201.1 578.9"/>
  <path d="M1168.9 575.6L1197.8 573.3M1165.3 562.5L1166.4 577.8"/>
  <path d="M1226.7 545L1228.9 547.2L1230.5 575.5L1229 576M1230 575L1235.5 584.4L1234 569.4"/>
 </g>
 <!-- bottom-left triad -->
 <g fill="none" stroke="#2a2a2a" stroke-width="0.8">
  <path d="M64.6 883.4L96.9 880.2M64.6 883.4L68.7 889.8M96.9 880.2L100.8 886.6M68.7 889.8L100.8 886.6M64.6 883.4L66.5 915.3M68.7 889.8L71 921.2M100.8 886.6L103.3 918M71 921.2L103.3 918M66.5 915.3L71 921.2"/>
 </g>
 <path d="M94.8 848.2L99 911.6" stroke="#55ee33" stroke-width="1"/>
 <path d="M34.4 917.4L99 911.6" stroke="#22eedd" stroke-width="1.2"/>
 <path d="M99 911.6L104 920" stroke="#ff3333" stroke-width="1"/>
 <circle cx="94.8" cy="848.2" r="4.3" fill="#44ee00"/>
 <circle cx="34.4" cy="917.4" r="4.3" fill="#11eedd"/>
 <circle cx="107" cy="924.9" r="6" fill="#ff0000"/>
 <text x="95" y="833" font-size="8" fill="#44dd22" font-family="Liberation Sans">Y</text>
 <text x="120.5" y="927" font-size="9" fill="#ff3333" font-family="Liberation Sans">X</text>
 <text x="30" y="915" font-size="6" fill="#22ddcc" font-family="Liberation Sans">Z</text>
</svg>


<!-- view toolbar -->
<div class="a" style="left:846px;top:968px;width:228px;height:28px;background:#eceef0;border:1px solid #c9ccd0"></div>
<div class="a" style="left:851px;top:969px;width:217px;height:26px;background:#fff"></div>
<div class="a" style="left:878px;top:969px;width:1px;height:26px;background:#d8dadd"></div>
<div class="a" style="left:905px;top:969px;width:1px;height:26px;background:#d8dadd"></div>
<div class="a" style="left:932px;top:969px;width:1px;height:26px;background:#d8dadd"></div>
<div class="a" style="left:959px;top:969px;width:1px;height:26px;background:#d8dadd"></div>
<div class="a" style="left:987px;top:969px;width:1px;height:26px;background:#d8dadd"></div>
<div class="a" style="left:1014px;top:969px;width:1px;height:26px;background:#d8dadd"></div>
<div class="a" style="left:1041px;top:969px;width:1px;height:26px;background:#d8dadd"></div>
<div class="a" style="left:1016px;top:970px;width:24px;height:24px;background:linear-gradient(#ececec,#d9dadb);border:1px solid #b5b7ba;border-top:2px solid #9fa2a5"></div>
<div class="a" style="left:1043px;top:970px;width:24px;height:24px;background:linear-gradient(#ececec,#d9dadb);border:1px solid #b5b7ba;border-top:2px solid #9fa2a5"></div>
<svg class="a" style="left:0;top:0" width="1920" height="1080" viewBox="0 0 1920 1080">
 <g>
  <rect x="857.5" y="974.5" width="14" height="13" fill="#f2f2f2" stroke="#999" stroke-width="1"/>
  <circle cx="865" cy="981" r="4" fill="#fff" stroke="#2a88c0" stroke-width="1.3"/>
  <path d="M868 984l3.5 3.5" stroke="#888" stroke-width="2.2"/>
  <circle cx="890.5" cy="980" r="5" fill="#fff" stroke="#1a78b0" stroke-width="1.3"/>
  <path d="M888 980h5M890.5 977.5v5" stroke="#1a78b0" stroke-width="1.8"/>
  <path d="M894 984l4 4" stroke="#999" stroke-width="2.4"/>
  <circle cx="917.5" cy="980" r="5" fill="#fff" stroke="#1a78b0" stroke-width="1.3"/>
  <path d="M915 980h5" stroke="#1a78b0" stroke-width="1.8"/>
  <path d="M921 984l4 4" stroke="#999" stroke-width="2.4"/>
  <rect x="938.5" y="974.5" width="15" height="15" fill="#fff" stroke="#8a9aa8" stroke-width="1"/>
  <path d="M939 989c6-2 10-8 14-14v14z" fill="#5aa8cc"/>
  <path d="M941 988l11-11" stroke="#1a5a80" stroke-width="1.2"/>
  <path d="M965.5 976.5l2-2h10l2 2v11h-14z" fill="#e8f4fb" stroke="#8ec5e0" stroke-width="1"/>
  <rect x="973.5" y="981.5" width="8" height="9" fill="#fff" stroke="#888" stroke-width="0.8"/>
  <path d="M975 984h5M975 986h5M975 988h5" stroke="#888" stroke-width="0.7"/>
  <path d="M981.5 991l2-2v2z" fill="#333"/>
  <path d="M994 980l6-3 6 3v5l-6 3-6-3z" fill="#9fd4ee" stroke="#3a90c0" stroke-width="0.8"/>
  <path d="M993 975l6 6M1002 981l6 0M998 983l-3 6" stroke="#a07020" stroke-width="1"/>
  <rect x="1020" y="974" width="9" height="6" fill="#fcf3d8" stroke="#bbb" stroke-width="0.6"/>
  <path d="M1029 977h4v4" fill="none" stroke="#333" stroke-width="0.8"/>
  <ellipse cx="1031" cy="987.5" rx="4" ry="2" fill="#fff" stroke="#333" stroke-width="1.2"/>
  <circle cx="1031" cy="987.5" r="1" fill="#333"/>
  <path d="M1050 978l5 5 6-2M1055 983l-4 5" stroke="#333" stroke-width="1" fill="none"/>
  <circle cx="1050.5" cy="977.5" r="2.2" fill="#5aaa5a"/>
  <circle cx="1061" cy="982" r="2.2" fill="#e86a6a"/>
  <circle cx="1050.5" cy="988.5" r="2.2" fill="#3a8ab8"/>
 </g>
</svg>

<!-- ===== Status bar ===== -->
<div class="a" style="left:0;top:1008px;width:1920px;height:32px;background:#eff0f2"></div>
<div class="a" style="left:19px;top:1021px;width:5px;height:5px;border-radius:50%;background:#1a6a8e"></div>
<div class="a t12" style="left:29px;top:1017px;color:#333">正在更新显示 <span style="letter-spacing:-1.2px">...</span></div>
<div class="a" style="left:1529px;top:1011px;width:1px;height:25px;background:#d3d5d8;box-shadow:1px 0 0 #fff"></div>

<!-- ===== Taskbar ===== -->
<div class="a" style="left:0;top:1040px;width:1920px;height:40px;background:#010308"></div>
<div class="a" style="left:48px;top:1040px;width:344px;height:40px;background:#333333"></div>

<svg class="a" style="left:0;top:1040px" width="1920" height="40" viewBox="0 1040 1920 40">
 <!-- windows logo -->
 <path d="M16 1044.5h0z" />
 <path d="M16 1053.8l7-1v6.7h-7zM24.6 1052.6l7.4-1.1v8h-7.4zM16 1061.1h7v6.7l-7-1zM24.6 1061.1h7.4v8l-7.4-1.1z" fill="#fff"/>
 <!-- cortana -->
 <circle cx="68" cy="1060" r="9.5" fill="none" stroke="#fff" stroke-width="2.4"/>
 <!-- mic -->
 <rect x="369.5" y="1052.5" width="5" height="10" rx="1" fill="none" stroke="#9a9a9a" stroke-width="1"/>
 <path d="M366.5 1060.5c0 4 2.5 5.5 5.5 5.5s5.5-1.5 5.5-5.5M372 1066v2M369 1068h6" fill="none" stroke="#9a9a9a" stroke-width="1"/>
 <!-- task view -->
 <rect x="410.5" y="1053.5" width="12" height="13" fill="none" stroke="#fff" stroke-width="1.3"/>
 <path d="M408.5 1055.5h-1.5v9h1.5M424.5 1055.5h1.5v9h-1.5" fill="none" stroke="#fff" stroke-width="1.1"/>
 <!-- edge -->
 <path d="M458 1062c0-7 5-11 10-11 5.5 0 9 3.5 9 9.5h-13c0 4 3 6 6.5 6 2.5 0 5-1 6.5-2v4c-2 1-4.5 1.5-7 1.5-7 0-10.5-4-10.5-8.5 0-3 1.5-5.5 4-7-3 1-5 3.5-5.5 7.5zM464 1058.5h7.5c0-2.5-1.5-4-3.7-4s-3.6 1.5-3.8 4z" fill="#1e7ad6"/>
 <!-- explorer -->
 <path d="M505 1052.5h7l1.5 1.5h12.5v14.5h-21z" fill="#f5d77e"/>
 <path d="M505 1056h21v12.5h-21z" fill="#fbe49a"/>
 <path d="M509.5 1069.5v-7h11.5v7h-3.5v-3.5h-4.5v3.5z" fill="#3aa0e0"/>
 <rect x="506" y="1053" width="4" height="1.5" fill="#7ab8d8"/>
 <!-- store -->
 <path d="M554 1055h21v15l-20 -2z" fill="#fff"/>
 <path d="M559 1055c0-4 2-6 4.5-6s4.5 2 4.5 6M561 1055c0-3 1.5-5 3.5-5s3.5 2 3.5 5" fill="none" stroke="#fff" stroke-width="1"/>
 <path d="M557.5 1059.5h4v3h-4zM562.5 1059.5h4.5v3h-4.5zM557.5 1063.5h4v3h-4zM562.5 1063.5h4.5v3h-4.5z" fill="#010308"/>
 <!-- thunder -->
 <rect x="602.5" y="1049" width="22.5" height="22" rx="3" fill="#f4f8fe"/>
 <path d="M606 1054c4 3 7 5 8 9 2-3 5-5 9-5-3 1-5 3-5.5 5 1.5 1 3 2 4 1.5-2 1.5-4.5 1-6-.5-.5 2 0 4 1 6-3-1.5-4.5-4-4.5-6.5-2-3.5-4-6-6-8.5z" fill="#2a86e8"/>
 <!-- IDM -->
 <rect x="643" y="1040" width="38" height="37.5" fill="#5f5a18"/>
 <rect x="681" y="1040" width="2.5" height="37.5" fill="#1b1d22"/>
 <ellipse cx="654" cy="1061" rx="5.5" ry="6" fill="none" stroke="#e0c020" stroke-width="3"/>
 <path d="M650 1062a5 5 0 0 0 6 5" fill="none" stroke="#4a70d0" stroke-width="2"/>
 <circle cx="665.5" cy="1055.5" r="6.5" fill="#5ea0d8"/>
 <path d="M661 1052c2-2 5-2 6 0-1 2-3 3-5 3z" fill="#b8c040"/>
 <path d="M661 1059l14 2-7 2-3 7z" fill="#10b010"/>
 <rect x="643" y="1077.5" width="31" height="2.5" fill="#ffff00"/>
 <rect x="675" y="1077.5" width="8.5" height="2.5" fill="#d8c800"/>
 <!-- chrome -->
 <circle cx="712" cy="1060" r="11" fill="#dd4b3c"/>
 <path d="M712 1060L702.5 1054.5A11 11 0 0 0 706.5 1069.5z" fill="#1aa260"/>
 <path d="M712 1060L706.5 1069.5A11 11 0 0 0 723 1060h-5z" fill="#ffce44"/>
 <path d="M712 1060L723 1060A11 11 0 0 0 721.5 1054.5L712 1054.5z" fill="#dd4b3c"/>
 <circle cx="712" cy="1060" r="5" fill="#fff"/>
 <circle cx="712" cy="1060" r="4" fill="#4a86e8"/>
 <!-- monster -->
 <rect x="749" y="1048" width="24.5" height="24" rx="4" fill="#12a8ee"/>
 <ellipse cx="760" cy="1061" rx="6" ry="6.5" fill="#80c838"/>
 <circle cx="757.5" cy="1057.5" r="2" fill="#fff"/><circle cx="762" cy="1057.5" r="2" fill="#fff"/>
 <circle cx="757.5" cy="1057.5" r="0.8" fill="#222"/><circle cx="762" cy="1057.5" r="0.8" fill="#222"/>
 <ellipse cx="760" cy="1062.5" rx="1.8" ry="1.2" fill="#8a2a10"/>
 <path d="M765 1060l6 4-5 5z" fill="#e86a20"/>
 <circle cx="753" cy="1053" r="2.5" fill="#eee"/>
 <!-- creo active -->
 <rect x="786" y="1040" width="44.5" height="37.5" fill="#33363b"/>
 <rect x="830.5" y="1040" width="3.5" height="37.5" fill="#26282c"/>
 <rect x="798" y="1048" width="24" height="24" fill="#fff" stroke="#7a7a7a" stroke-width="0.6"/>
 <path d="M802.5 1052v16h15.5v-4.5h-11.5v-11.5z" fill="#e2e2de" stroke="#777" stroke-width="0.6"/>
 <rect x="807" y="1052" width="11" height="11" fill="#0a94d8" stroke="#0a68a8" stroke-width="0.8"/>
 <!-- underlines -->
 <g fill="#76b9ed">
  <rect x="447" y="1077.5" width="40" height="2.5"/>
  <rect x="496" y="1077.5" width="40" height="2.5"/>
  <rect x="692" y="1077.5" width="40" height="2.5"/>
  <rect x="741" y="1077.5" width="40" height="2.5"/>
  <rect x="786" y="1077.5" width="48" height="2.5"/>
 </g>
</svg>
<div class="a" style="left:84px;top:1051px;font-size:14px;line-height:18px;color:#b8b8b8;white-space:nowrap">有问题尽管问我</div>



<!-- tray -->
<div class="a" style="left:1709px;top:1013px;width:206px;height:27px;background:rgba(255,255,255,0.25)"></div>
<div class="a" style="left:1709px;top:1040px;width:206px;height:34.5px;background:rgba(255,255,255,0.35)"></div>

<svg class="a" style="left:1590px;top:1040px" width="330" height="40" viewBox="1590 1040 330 40">
 <path d="M1610 1063l6-6 6 6" fill="none" stroke="#fff" stroke-width="1.3"/>
 <rect x="1632" y="1052" width="16" height="16" rx="3" fill="#12a8ee"/>
 <ellipse cx="1639" cy="1061" rx="4" ry="4.2" fill="#80c838"/>
 <path d="M1643 1059l4 3-3 3z" fill="#e86a20"/>
 <circle cx="1637.5" cy="1059" r="1.3" fill="#fff"/><circle cx="1640.5" cy="1059" r="1.3" fill="#fff"/>
 <!-- qq -->
 <ellipse cx="1664" cy="1057.5" rx="4" ry="5" fill="#222"/>
 <ellipse cx="1664" cy="1059" rx="2.8" ry="3.2" fill="#fff"/>
 <path d="M1660 1061.5h8l-1 1.5h-6z" fill="#e8a020"/>
 <path d="M1656 1068c2-4 6-6 10-5 4 1 6 3 7 5z" fill="#3a80e0"/>
 <path d="M1657 1066c4-2 9-2 14 1" stroke="#ffd040" stroke-width="1.2" fill="none"/>
 <!-- wechat -->
 <ellipse cx="1686" cy="1058" rx="6" ry="5" fill="#48c040"/>
 <ellipse cx="1691.5" cy="1062" rx="5" ry="4.2" fill="#e8e8e8"/>
 <!-- blue hex -->
 <rect x="1704" y="1052" width="16" height="16" fill="#fff"/>
 <path d="M1712 1053.5l6 3.5v7l-6 3.5-6-3.5v-7z" fill="#6aaae8" stroke="#3a7ac0" stroke-width="0.8"/>
 <path d="M1712 1057l3 1.8v3.4l-3 1.8-3-1.8v-3.4z" fill="#d8ecfa"/>
 <!-- network -->
 <rect x="1733.5" y="1054.5" width="10.5" height="8" fill="none" stroke="#fff" stroke-width="1.3"/>
 <path d="M1739 1062.5v4M1734.5 1066.5h9M1728.5 1054v13M1728.5 1054h3.5v3h-3.5" fill="none" stroke="#fff" stroke-width="1.3"/>
 <!-- volume -->
 <path d="M1752.5 1057.5h3l4-3.5v12l-4-3.5h-3z" fill="none" stroke="#fff" stroke-width="1.3"/>
 <path d="M1762 1057c1.5 2 1.5 4 0 6M1764.5 1055c2.5 3 2.5 7 0 10M1767 1053.5c3 4 3 9 0 13" fill="none" stroke="#fff" stroke-width="1"/>
 <!-- notification -->
 <path d="M1880.5 1053.5h14v10.5h-5.5l-1.5 2.5-1.5-2.5h-5.5z" fill="none" stroke="#fff" stroke-width="1.1"/>
</svg>

<!-- watermark -->
<svg class="a" style="left:1700px;top:1008px" width="220" height="72" viewBox="1700 1008 220 72">
 <defs>
  <clipPath id="wmTop"><rect x="1700" y="1008" width="220" height="31.5"/></clipPath>
  <clipPath id="wmBot"><rect x="1700" y="1039.5" width="220" height="40"/></clipPath>
 </defs>
 <g clip-path="url(#wmTop)">
  <ellipse cx="1733" cy="1038" rx="23" ry="14" transform="rotate(42 1733 1038)" fill="none" stroke="#a9b8c8" stroke-width="3.2"/>
  <path d="M1747 1038c9-6 18-4 19 5 1 10-6 22-16 27" fill="none" stroke="#e79a9e" stroke-width="3.5"/>
  <text x="1779" y="1044" font-size="28" font-weight="bold" fill="#8fd6aa" font-family="Liberation Serif" letter-spacing="1">野火论坛</text>
 </g>
 <g clip-path="url(#wmBot)">
  <ellipse cx="1733" cy="1038" rx="23" ry="14" transform="rotate(42 1733 1038)" fill="none" stroke="#2e3640" stroke-width="3"/>
  <path d="M1747 1038c9-6 18-4 19 5 1 10-6 22-16 27" fill="none" stroke="#6a1218" stroke-width="3.5"/>
  <text x="1779" y="1044" font-size="28" font-weight="bold" fill="#0a4a24" font-family="Liberation Serif" letter-spacing="1">野火论坛</text>
  <text x="1767" y="1067.5" font-size="16" fill="rgba(30,80,80,0.7)" font-family="Liberation Sans" textLength="143" lengthAdjust="spacingAndGlyphs">www.proewildfire.cn</text>
 </g>
</svg>
<div class="a" style="left:1776px;top:1051px;font-size:14px;line-height:18px;color:#fff;white-space:nowrap">英</div>
<div class="a" style="left:1815px;top:1044px;font-size:12.5px;line-height:14px;color:#fff;white-space:nowrap">16:22</div>
<div class="a" style="left:1796px;top:1062.5px;font-size:13px;line-height:14px;color:#fff;white-space:nowrap">2016/10/31</div>
</body></html>
